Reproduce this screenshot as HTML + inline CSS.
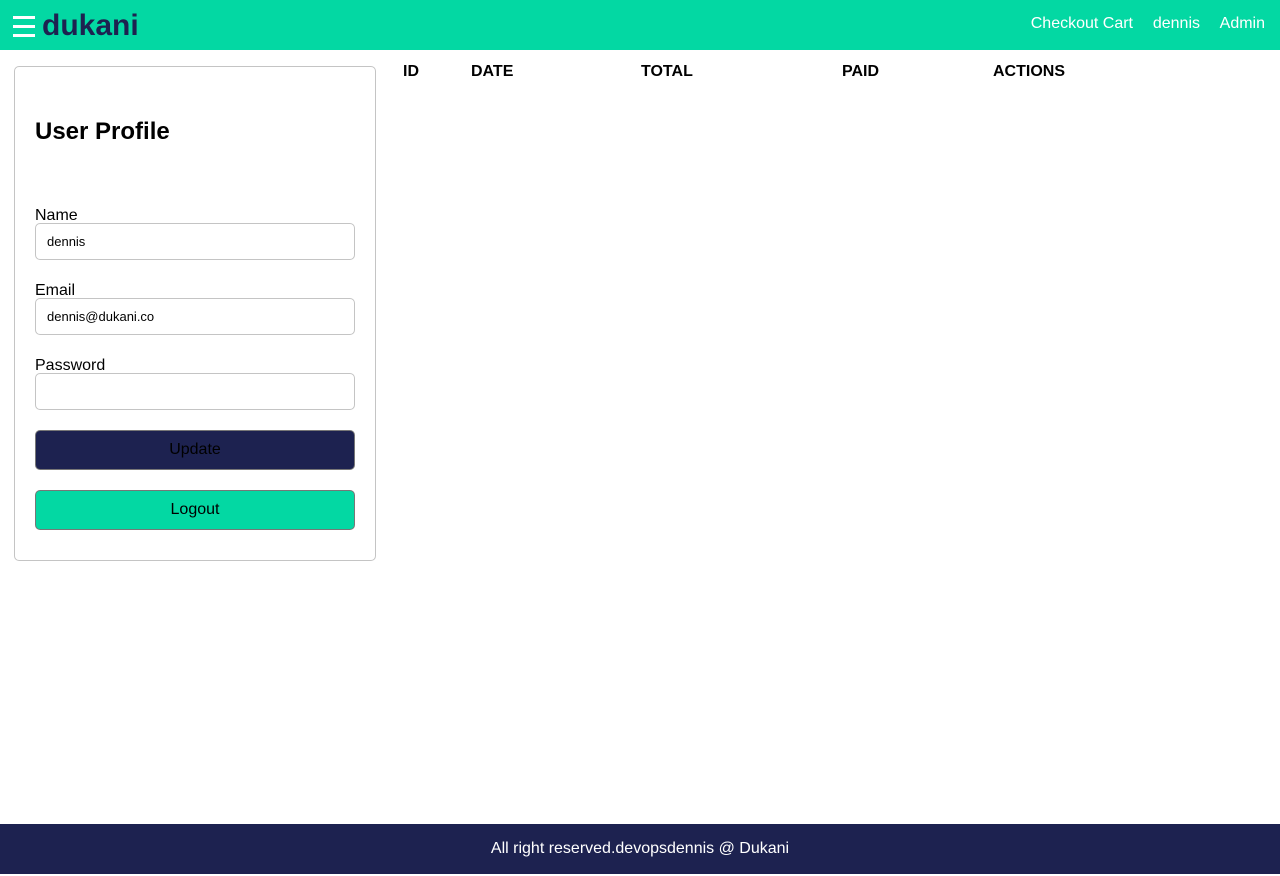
<!DOCTYPE html>
<html><head><style>
*{box-sizing:border-box;margin:0;padding:0}
body{width:1280px;height:876px;position:relative;font-family:"Liberation Sans",Arial,sans-serif;background:#fff;overflow:hidden}
.hdr{position:absolute;left:0;top:0;width:1280px;height:50px;background:#03d8a3}
.ham{position:absolute;left:13px;top:16px;width:22px}
.ham i{display:block;height:3px;background:#fff;margin-bottom:6px}
.logo{position:absolute;left:42px;top:9px;font-size:30px;font-weight:bold;color:#1d2250}
.nav{position:absolute;top:15px;font-size:16px;color:#fff}
.card{position:absolute;left:14px;top:66px;width:362px;height:495px;border:1px solid #c4c4c4;border-radius:5px}
h2{position:absolute;left:35px;top:118px;font-size:24px;font-weight:bold}
.lbl{position:absolute;left:35px;font-size:16px}
.inp{position:absolute;left:35px;width:320px;height:37px;border:1px solid #c4c4c4;border-radius:5px;font-size:13px;padding:10px 0 0 11px}
.btn{position:absolute;left:35px;width:320px;height:40px;border:1px solid #777;border-radius:5px;font-size:16px;text-align:center;line-height:38px;color:#000}
.th{position:absolute;top:63px;font-size:16px;font-weight:bold}
.ftr{position:absolute;left:0;top:824px;width:1280px;height:50px;background:#1d2250;color:#fff;font-size:16px;text-align:center;line-height:49px}
</style></head><body>
<div class="hdr">
<div class="ham"><i></i><i></i><i></i></div>
<div class="logo">dukani</div>
<div class="nav" style="right:147px">Checkout Cart</div>
<div class="nav" style="right:80px">dennis</div>
<div class="nav" style="right:15px">Admin</div>
</div>
<div class="card"></div>
<h2>User Profile</h2>
<div class="lbl" style="top:207px">Name</div>
<div class="inp" style="top:223px">dennis</div>
<div class="lbl" style="top:282px">Email</div>
<div class="inp" style="top:298px">dennis@dukani.co</div>
<div class="lbl" style="top:357px">Password</div>
<div class="inp" style="top:373px"></div>
<div class="btn" style="top:430px;background:#1d2250">Update</div>
<div class="btn" style="top:490px;background:#03d8a3">Logout</div>
<div class="th" style="left:403px">ID</div>
<div class="th" style="left:471px">DATE</div>
<div class="th" style="left:641px">TOTAL</div>
<div class="th" style="left:842px">PAID</div>
<div class="th" style="left:993px">ACTIONS</div>
<div class="ftr">All right reserved.devopsdennis @ Dukani</div>
</body></html>
